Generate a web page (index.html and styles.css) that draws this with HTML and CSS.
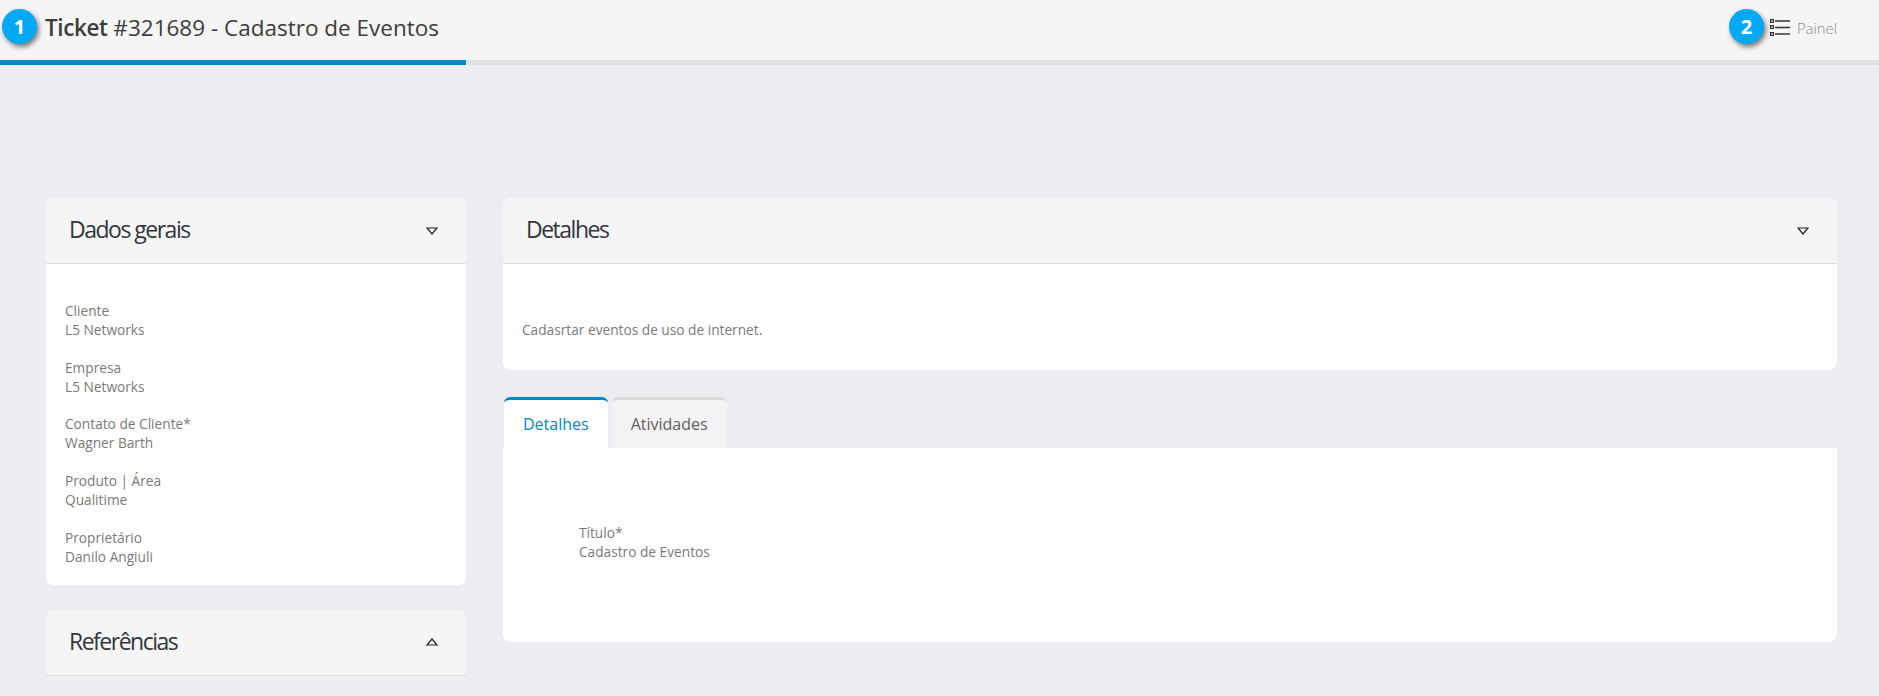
FILE: index.html
```html
<!DOCTYPE html>
<html lang="pt">
<head>
<meta charset="utf-8">
<title>Ticket #321689</title>
<link rel="stylesheet" href="styles.css">
</head>
<body>
<header class="topbar">
  <div class="topbar-row">
    <h1 class="page-title"><b>Ticket</b> #321689 - Cadastro de Eventos</h1>
    <a class="panel-link">
      <svg class="list-icon" width="20" height="18" viewBox="0 0 20 18">
        <rect x="0.5" y="0.5" width="3" height="3" fill="#aaa" stroke="#333" stroke-width="1"/>
        <rect x="0.5" y="6.5" width="3" height="3" fill="#aaa" stroke="#333" stroke-width="1"/>
        <rect x="0.5" y="13.5" width="3" height="3" fill="#aaa" stroke="#333" stroke-width="1"/>
        <path d="M5 2h15M5 8.5h15M5 15h15" stroke="#333" stroke-width="1.4" fill="none"/>
      </svg>
      <span>Painel</span>
    </a>
  </div>
  <div class="progress"><div class="progress-fill"></div></div>
  <span class="badge badge-one">1</span>
  <span class="badge badge-two">2</span>
</header>
<main class="content">
  <aside class="side">
    <section class="card">
      <div class="card-head">
        <h2>Dados gerais</h2>
        <svg class="caret" width="12" height="8" viewBox="0 0 12 8"><path d="M1 1h10L6 7z" fill="none" stroke="#222" stroke-width="1.2"/></svg>
      </div>
      <div class="fields">
        <div class="field"><div>Cliente</div><div>L5 Networks</div></div>
        <div class="field"><div>Empresa</div><div>L5 Networks</div></div>
        <div class="field"><div>Contato de Cliente*</div><div>Wagner Barth</div></div>
        <div class="field"><div>Produto | Área</div><div>Qualitime</div></div>
        <div class="field"><div>Proprietário</div><div>Danilo Angiuli</div></div>
      </div>
    </section>
    <section class="card card-closed">
      <div class="card-head">
        <h2>Referências</h2>
        <svg class="caret" width="12" height="8" viewBox="0 0 12 8"><path d="M1 7h10L6 1z" fill="none" stroke="#222" stroke-width="1.2"/></svg>
      </div>
    </section>
  </aside>
  <div class="main-col">
    <section class="card">
      <div class="card-head">
        <h2>Detalhes</h2>
        <svg class="caret" width="12" height="8" viewBox="0 0 12 8"><path d="M1 1h10L6 7z" fill="none" stroke="#222" stroke-width="1.2"/></svg>
      </div>
      <p class="details-text">Cadasrtar eventos de uso de internet.</p>
    </section>
    <div class="tabs">
      <div class="tab tab-active">Detalhes</div>
      <div class="tab">Atividades</div>
    </div>
    <section class="tab-panel">
      <div class="field"><div>Título*</div><div>Cadastro de Eventos</div></div>
    </section>
  </div>
</main>
</body>
</html>
```
FILE: styles.css
```css
* { box-sizing: border-box; }
html, body { margin: 0; height: 100%; }
body {
  background: #ebedf1;
  font-family: "Open Sans", sans-serif;
  color: #7a7a7a;
  font-size: 13.7px;
  overflow: hidden;
}
.topbar { position: relative; background: #f5f5f5; }
.topbar-row {
  height: 60px;
  display: flex;
  align-items: center;
  justify-content: space-between;
  padding: 0 42px 4px 45px;
}
.page-title {
  margin: 0;
  font-size: 22.5px;
  font-weight: 400;
  color: #3c3c3c;
  line-height: 30px;
}
.page-title b { font-weight: 600; letter-spacing: -0.4px; }
.panel-link {
  display: flex;
  align-items: center;
  gap: 7px;
  font-size: 14.8px;
  font-weight: 300;
  color: #8a8a8a;
}
.list-icon { display: block; }
.progress { height: 5px; background: #e0e1e5; }
.progress-fill { width: 466px; height: 100%; background: #0088cc; }
.badge {
  position: absolute;
  top: 9px;
  width: 35px;
  height: 35px;
  border-radius: 50%;
  background: #03a9f4;
  color: #fff;
  font-weight: 700;
  font-size: 20px;
  line-height: 35px;
  text-align: center;
  box-shadow: 2px 3px 5px rgba(0, 0, 0, 0.5);
}
.badge-one { left: 2px; }
.badge-two { left: 1729px; }
.content {
  display: flex;
  gap: 37px;
  align-items: flex-start;
  padding: 133px 42px 0 46px;
}
.side { width: 420px; flex: none; display: flex; flex-direction: column; gap: 25px; }
.main-col { flex: 1; min-width: 0; }
.card { background: #fff; border-radius: 8px; overflow: hidden; }
.card-closed { background: transparent; border-radius: 8px 8px 0 0; }
.card-head {
  height: 66px;
  padding: 0 28px 0 23px;
  background: #f5f5f5;
  border-bottom: 1px solid #dcdcdc;
  display: flex;
  align-items: center;
  justify-content: space-between;
}
.card-head h2 {
  margin: 0 0 3px;
  font-size: 23px;
  font-weight: 400;
  letter-spacing: -1.5px;
  color: #33363f;
  line-height: 30px;
}
.caret { display: block; }
.fields {
  padding: 36.7px 19px 18.7px;
  display: flex;
  flex-direction: column;
  gap: 18.9px;
}
.field { line-height: 19px; }
.details-text { margin: 0; padding: 56px 19px 31px; line-height: 19px; }
.tabs { display: flex; gap: 4px; margin-top: 27px; padding-left: 1px; }
.tab {
  height: 51px;
  padding: 0 19px;
  background: #f3f3f4;
  border-top: 3px solid #dcdcdc;
  border-radius: 6px 6px 0 0;
  font-size: 16px;
  color: #5e5e5e;
  line-height: 49px;
}
.tab-active { background: #fff; border-top-color: #0088cc; color: #0088cc; }
.tab-panel {
  background: #fff;
  height: 194px;
  padding: 75px 76px 0;
  border-radius: 0 0 8px 8px;
}
```
